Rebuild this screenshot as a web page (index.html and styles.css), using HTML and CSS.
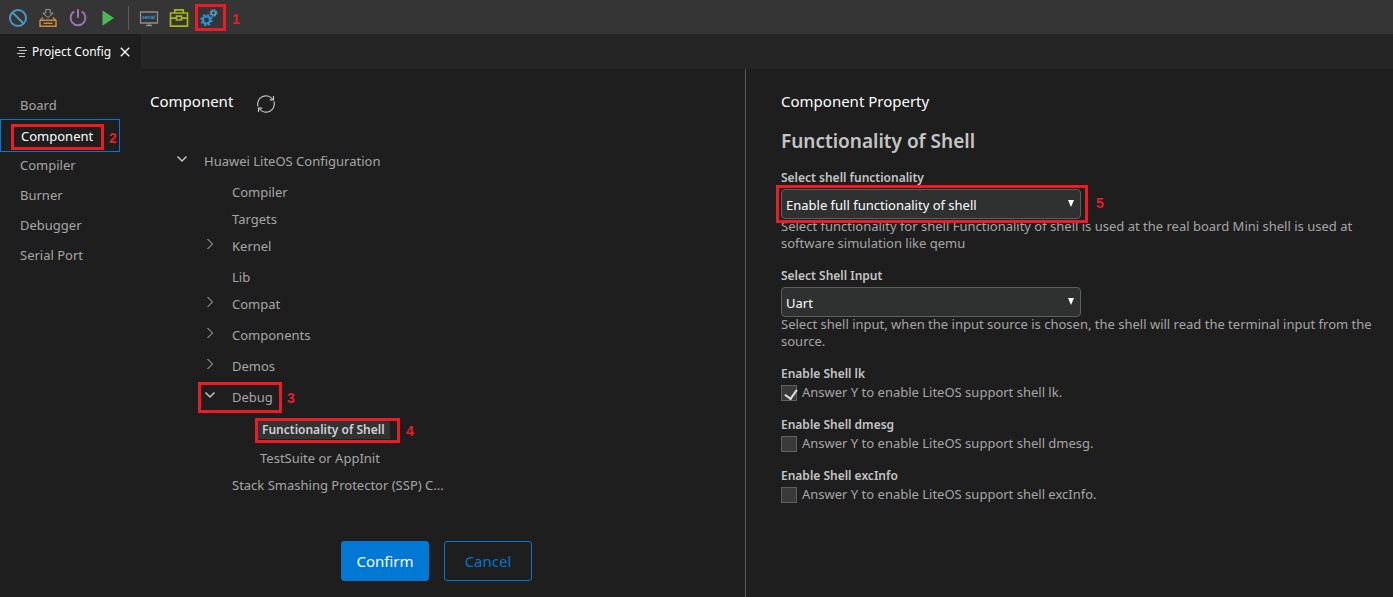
FILE: index.html
```html
<!DOCTYPE html>
<html lang="en">
<head>
<meta charset="utf-8">
<title>Project Config</title>
<link rel="stylesheet" href="styles.css">
</head>
<body>
<header class="toolbar">
  <button class="tool" aria-label="Stop"><svg width="20" height="20" viewBox="0 0 20 20" fill="none" stroke="#4a96c8" stroke-width="2"><circle cx="10" cy="10" r="8"/><path d="M4.300 4.300l11.400 11.400"/></svg></button>
  <button class="tool" aria-label="Download"><svg width="20" height="20" viewBox="0 0 20 20" fill="none"><path d="M7.800 1.500h4.400v3.600h3L10 9.600 4.800 5.100h3z" stroke="#999" stroke-width="1"/><path d="M5 9.500L2 12.500v5.700h16v-5.700l-3-3" stroke="#c98a3d" stroke-width="1.500"/><path d="M2 12.300h16M5.500 15.300h9" stroke="#c98a3d" stroke-width="1.600"/></svg></button>
  <button class="tool" aria-label="Power"><svg width="20" height="20" viewBox="0 0 20 20" fill="none" stroke="#9d74b5" stroke-width="2"><path d="M6.300 3.400a7.400 7.400 0 1 0 7.400 0M10 1.200v8.600"/></svg></button>
  <button class="tool" aria-label="Run"><svg width="20" height="20" viewBox="0 0 20 20"><path d="M4.500 2.500L16 10 4.500 17.800z" fill="#4db856"/></svg></button>
  <span class="separator"></span>
  <button class="tool" aria-label="Serial"><svg width="20" height="20" viewBox="0 0 20 20" fill="none"><path d="M1.500 4h17v11h-17zM7 17.500h6M10 15v2.500" stroke="#8c8c8c" stroke-width="1.300"/><text x="3" y="11" class="serial">serial</text></svg></button>
  <button class="tool" aria-label="Toolbox"><svg width="20" height="20" viewBox="0 0 20 20" fill="none" stroke="#a8b80c" stroke-width="1.700"><path d="M1.500 5h17v13.200h-17zM5.700 5V1.800h8.600V5M1.500 10.200h6M12.500 10.200h6M7.500 8.200h5v3.800h-5z"/></svg></button>
  <button class="tool" aria-label="Settings"><svg width="20" height="20" viewBox="0 0 20 20" fill="none"><circle cx="7.500" cy="12" r="3.600" stroke="#2f8fd0" stroke-width="2.400"/><circle cx="7.500" cy="12" r="5.300" stroke="#2f8fd0" stroke-width="1.700" stroke-dasharray="2.200 1.960"/><circle cx="14.500" cy="5" r="2.100" stroke="#5aa5d6" stroke-width="1.400"/><circle cx="14.500" cy="5" r="3.300" stroke="#5aa5d6" stroke-width="1.300" stroke-dasharray="1.400 1.200"/></svg><span class="mark mark-1"></span><span class="num num-1">1</span></button>
</header>
<nav class="tabs">
  <div class="tab"><svg width="10" height="10" viewBox="0 0 10 10" stroke="#c5c5c5" stroke-width="1"><path d="M0 .5h8M2 3.500h8M0 6.500h8M2 9.500h6"/></svg><span>Project Config</span><button class="close" aria-label="Close"><svg width="10" height="10" viewBox="0 0 10 10" stroke="#fff" stroke-width="1.300"><path d="M.8.8l8.400 8.400M9.200.8L.8 9.200"/></svg></button></div>
</nav>
<main class="main">
  <nav class="sidebar">
    <a class="side" href="#">Board</a>
    <a class="side current" href="#">Component<span class="mark mark-2"></span><span class="num num-2">2</span></a>
    <a class="side" href="#">Compiler</a>
    <a class="side" href="#">Burner</a>
    <a class="side" href="#">Debugger</a>
    <a class="side" href="#">Serial Port</a>
  </nav>
  <section class="components">
    <div class="head"><h1 class="title">Component</h1><button class="refresh" aria-label="Refresh"><svg width="20" height="20" viewBox="0 0 20 20" fill="none" stroke="#c5c5c5" stroke-width="1.200"><path d="M2 12.500A8.300 8.300 0 0 1 16.500 5M18 7.500A8.300 8.300 0 0 1 3.500 15M17.500 2v3.800h-3.800M2.500 18v-3.800h3.800"/></svg></button></div>
    <ul class="tree">
      <li><div class="row parent"><svg class="chev" viewBox="0 0 12 12"><path d="M1.500 3.500L6 8l4.500-4.500" stroke-width="1.500"/></svg>Huawei LiteOS Configuration</div>
        <ul>
          <li><div class="row">Compiler</div></li>
          <li><div class="row">Targets</div></li>
          <li><div class="row parent"><svg class="chev" viewBox="0 0 12 12"><path d="M3.500 1l5 5-5 5"/></svg>Kernel</div></li>
          <li><div class="row">Lib</div></li>
          <li><div class="row parent"><svg class="chev" viewBox="0 0 12 12"><path d="M3.500 1l5 5-5 5"/></svg>Compat</div></li>
          <li><div class="row parent"><svg class="chev" viewBox="0 0 12 12"><path d="M3.500 1l5 5-5 5"/></svg>Components</div></li>
          <li><div class="row parent"><svg class="chev" viewBox="0 0 12 12"><path d="M3.500 1l5 5-5 5"/></svg>Demos</div></li>
          <li><div class="row parent"><svg class="chev" viewBox="0 0 12 12"><path d="M1.500 3.500L6 8l4.500-4.500" stroke-width="1.500"/></svg>Debug<span class="mark mark-3"></span><span class="num num-3">3</span></div>
            <ul>
              <li><div class="row chosen"><span class="pick">Functionality of Shell</span><span class="mark mark-4"></span><span class="num num-4">4</span></div></li>
              <li><div class="row">TestSuite or AppInit</div></li>
            </ul>
          </li>
          <li><div class="row">Stack Smashing Protector (SSP) C...</div></li>
        </ul>
      </li>
    </ul>
    <div class="actions"><button class="btn primary">Confirm</button><button class="btn">Cancel</button></div>
  </section>
  <section class="property">
    <h1 class="title">Component Property</h1>
    <h2 class="subtitle">Functionality of Shell</h2>
    <div class="field">
      <label class="label" for="func">Select shell functionality</label>
      <div class="pickbox"><select id="func"><option>Enable full functionality of shell</option></select><span class="mark mark-5"></span><span class="num num-5">5</span></div>
      <p class="desc">Select functionality for shell Functionality of shell is used at the real board Mini shell is used at software simulation like qemu</p>
    </div>
    <div class="field">
      <label class="label" for="input">Select Shell Input</label>
      <div class="pickbox"><select id="input"><option>Uart</option></select></div>
      <p class="desc">Select shell input, when the input source is chosen, the shell will read the terminal input from the source.</p>
    </div>
    <div class="field"><div class="label">Enable Shell lk</div><label class="check"><input type="checkbox" checked>Answer Y to enable LiteOS support shell lk.</label></div>
    <div class="field"><div class="label">Enable Shell dmesg</div><label class="check"><input type="checkbox">Answer Y to enable LiteOS support shell dmesg.</label></div>
    <div class="field"><div class="label">Enable Shell excInfo</div><label class="check"><input type="checkbox">Answer Y to enable LiteOS support shell excInfo.</label></div>
  </section>
</main>
</body>
</html>
```
FILE: styles.css
```css
* { box-sizing: border-box; }
body {
  margin: 0;
  min-height: 100vh;
  display: flex;
  flex-direction: column;
  background: #1e1e1e;
  color: #a6a6a6;
  font: 13px/17px "Noto Sans", sans-serif;
}
button { padding: 0; border: 0; background: none; font: inherit; color: inherit; }
svg { display: block; }
h1, h2, p, ul { margin: 0; padding: 0; }
ul { list-style: none; }

.toolbar { display: flex; align-items: center; gap: 10px; height: 34px; padding: 2px 8px 0; background: #353535; }
.tool { position: relative; width: 20px; height: 20px; }
.separator { width: 1px; height: 24px; background: #5c5c5c; }
.serial { font: bold 5px "Liberation Sans", sans-serif; fill: #3f9bd6; }

.tabs { height: 35px; display: flex; background: #252526; }
.tab { display: flex; align-items: center; gap: 5px; width: 141px; padding-left: 17px; background: #1e1e1e; color: #fff; font-size: 12px; white-space: nowrap; }
.close { margin-left: 4px; }

.main { flex: 1; display: grid; grid-template-columns: 120px 626fr 647fr; }
.sidebar { padding-top: 21px; }
.side { display: block; position: relative; height: 30px; padding-left: 20px; line-height: 30px; color: #a6a6a6; text-decoration: none; }
.side.current { height: 33px; margin: -1px 0 -2px; border: 1px solid #0078d4; color: #fff; line-height: 32px; }

.components { padding: 19px 0 15px 30px; border-right: 1px solid #5a5a5a; }
.head { display: flex; align-items: flex-start; gap: 23px; height: 60px; }
.title { color: #fff; font-size: 15px; line-height: 26px; font-weight: 400; }
.refresh { margin-top: 6px; }
.tree { padding-left: 54px; }
.tree ul { padding-left: 28px; }
.row { position: relative; height: 27px; line-height: 27px; white-space: nowrap; }
.parent { height: 31px; }
.chosen { height: 30px; line-height: 28px; }
.pick { display: inline-block; margin-left: -3px; padding: 0 5px; background: #333; color: #d0d0d0; font-size: 12px; font-weight: 600; line-height: 18px; }
.chev { position: absolute; left: -28px; top: 5px; width: 12px; height: 12px; fill: none; stroke: #c5c5c5; stroke-width: 1; }
.actions { display: flex; justify-content: center; gap: 15px; margin-top: 42px; padding-right: 22px; }
.btn { width: 88px; height: 40px; border: 1px solid #0078d4; border-radius: 3px; color: #0078d4; font-size: 15px; }
.primary { background: #0078d4; color: #fff; }

.property { padding: 19px 8px 0 35px; }
.subtitle { margin: 13px 0 14px; color: #c5c5c5; font-size: 19px; line-height: 28px; font-weight: 600; }
.field { margin-bottom: 15px; }
.label { display: block; margin-bottom: 2px; color: #c5c5c5; font-size: 12px; font-weight: 600; }
.pickbox { position: relative; width: 300px; margin-top: 3px; }
.pickbox::after { content: ""; position: absolute; right: 7px; top: 11px; border: solid transparent; border-width: 7px 3px 0; border-top-color: #fff; }
select { display: block; width: 100%; height: 30px; padding: 2px 4px 0; appearance: none; border: 1px solid #5f5f5f; border-radius: 4px; background: #2f3130; color: #fff; font: inherit; }
.desc { margin-top: -1px; }
.check { display: flex; align-items: center; gap: 5px; }
.check input { appearance: none; width: 16px; height: 16px; margin: 0; border: 1px solid #606060; background: #3a3a3a; }
.check input:checked::after { content: ""; display: block; width: 6px; height: 10px; margin: 1px 0 0 5px; border: solid #e0e0e0; border-width: 0 2px 2px 0; transform: rotate(35deg); }

.mark { position: absolute; border: 3px solid #ed1c24; }
.num { position: absolute; color: #ed1c24; font: bold 14px/16px "Liberation Sans", sans-serif; }
.mark-1 { left: -4px; top: -4px; width: 31px; height: 27px; }
.num-1 { left: 33px; top: 3px; }
.mark-2 { left: 10px; top: 4px; width: 93px; height: 26px; }
.num-2 { left: 108px; top: 10px; }
.mark-3 { left: -34px; top: -2px; width: 84px; height: 31px; }
.num-3 { left: 55px; top: 6px; }
.mark-4 { left: -5px; top: 3px; width: 145px; height: 25px; }
.num-4 { left: 146px; top: 8px; }
.mark-5 { left: -5px; top: -4px; width: 312px; height: 38px; }
.num-5 { left: 315px; top: 6px; }
```
